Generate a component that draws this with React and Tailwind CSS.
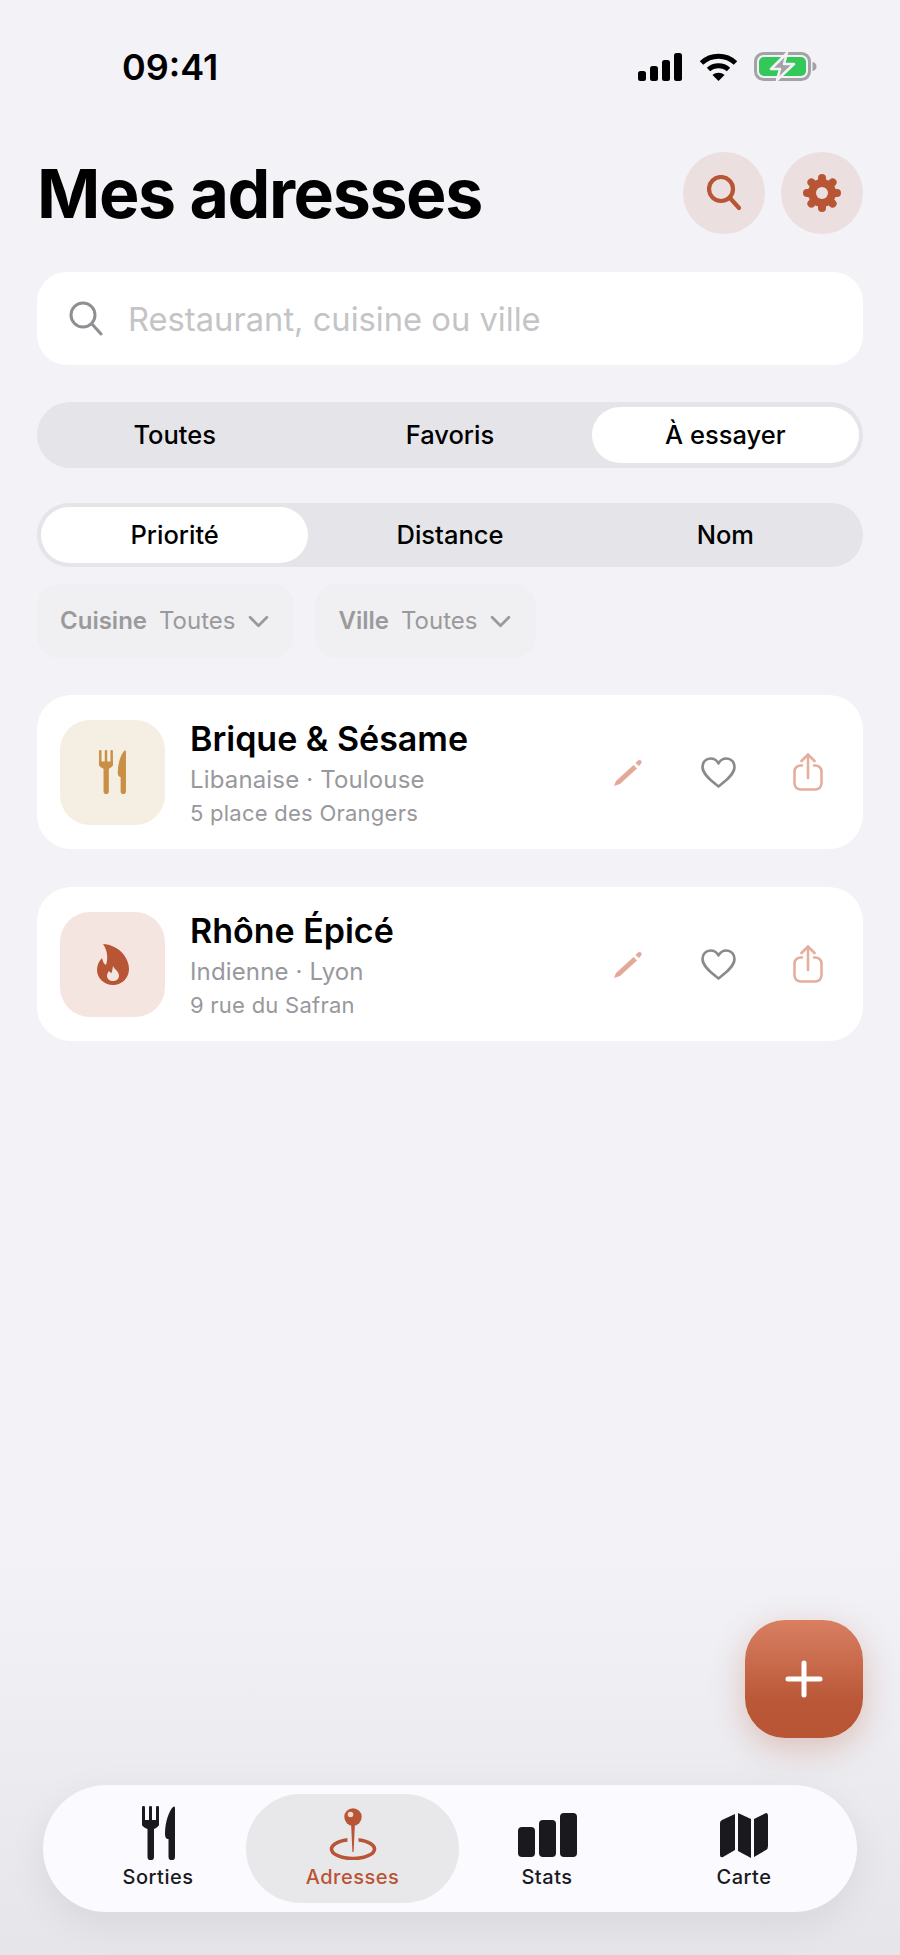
import React from 'react';

const ACCENT = '#b85535';

function Utensils({ className, color }) {
  return (
    <svg viewBox="0 0 33 54" className={className} fill={color}>
      <rect x="0" y="0" width="3" height="20" rx="1.3" />
      <rect x="7" y="0" width="3" height="20" rx="1.3" />
      <rect x="14" y="0" width="3" height="20" rx="1.3" />
      <path d="M0 14H17V17C17 20 15 22 12 23V51a3 3 0 0 1-6.5 0V23C2 22 0 20 0 17Z" />
      <path d="M33 2V51a3 3 0 0 1-6.5 0V33H26C24 33 23 31 23 28C23 16 27 5 31 1C32 0 33 .5 33 2Z" />
    </svg>
  );
}

function Flame() {
  return (
    <svg viewBox="0 0 32 41" className="w-[32px] h-[41px]">
      <path fill={ACCENT} d="M6 0C13 0 22 4 27 11C30 15 32 20 32 25C32 34 25 41 16 41C7 41 0 34 0 26C0 21 2 17 5 14C6 18 7 20 9 21C11 15 11 7 6 0Z" />
      <path fill="#f5e5e1" d="M16 22C17 25 22 27 22 32C22 35 19 37 16 37C13 37 10 35 10 32C10 30 11 28 12 27C13 28 13.5 29 14.5 29C15.5 27 15.5 24 16 22Z" />
    </svg>
  );
}

function SearchIcon({ color, width, className }) {
  return (
    <svg viewBox="0 0 34 36" className={className} fill="none" stroke={color} strokeWidth={width} strokeLinecap="round">
      <circle cx="14" cy="14" r="12" />
      <path d="M23 23L32 33" />
    </svg>
  );
}

function Gear() {
  const teeth = [0, 45, 90, 135];
  return (
    <svg viewBox="0 0 38 38" className="w-[38px] h-[38px]">
      <circle cx="19" cy="19" r="14" fill={ACCENT} />
      {teeth.map((a) => (
        <path key={a} d="M19 4V34" stroke={ACCENT} strokeWidth="8" strokeLinecap="round" transform={`rotate(${a} 19 19)`} />
      ))}
      <circle cx="19" cy="19" r="6" fill="#ecdfdf" />
    </svg>
  );
}

function Chevron() {
  return (
    <svg viewBox="0 0 20 12" className="w-[21px] h-[13px]" fill="none" stroke="#9a9a9c" strokeWidth="2.6" strokeLinecap="round" strokeLinejoin="round">
      <path d="M2 2L10 10L18 2" />
    </svg>
  );
}

function Pencil() {
  return (
    <svg viewBox="0 0 28 27" className="w-[28px] h-[27px]" fill="#e3a998">
      <path d="M0 27L2 22L19.5 6L23 9.5L6 25Z" />
      <path d="M21.5 4L24 1.5Q25.5 .3 27 1.5Q28.3 3 27 4.5L25 7Z" />
    </svg>
  );
}

function Heart() {
  return (
    <svg viewBox="0 0 35 31" className="w-[35px] h-[31px]" fill="none" stroke="#8a8a8e" strokeWidth="2.6" strokeLinejoin="round">
      <path d="M17.5 29.5C12 25 1.5 18 1.5 10C1.5 5 5 1.5 9.5 1.5C13 1.5 16 3.5 17.5 6.5C19 3.5 22 1.5 25.5 1.5C30 1.5 33.5 5 33.5 10C33.5 18 23 25 17.5 29.5Z" />
    </svg>
  );
}

function Share() {
  return (
    <svg viewBox="0 0 30 38" className="w-[30px] h-[38px]" fill="none" stroke="#e5ae9d" strokeWidth="2.6" strokeLinecap="round" strokeLinejoin="round">
      <path d="M9 12.5H7.5A6 6 0 0 0 1.5 18.5V30.5A6 6 0 0 0 7.5 36.5H22.5A6 6 0 0 0 28.5 30.5V18.5A6 6 0 0 0 22.5 12.5H21" />
      <path d="M15 25V2" />
      <path d="M8.5 8L15 1.5L21.5 8" />
    </svg>
  );
}

function StatusIcons() {
  return (
    <div className="flex items-center">
      <svg viewBox="0 0 45 28" className="w-[45px] h-[28px]" fill="#000">
        <rect x="0" y="18" width="8" height="10" rx="2.5" />
        <rect x="12" y="13" width="8" height="15" rx="2.5" />
        <rect x="24" y="7" width="8" height="21" rx="2.5" />
        <rect x="36" y="0" width="8" height="28" rx="2.5" />
      </svg>
      <svg viewBox="0 0 39 28" className="w-[39px] h-[28px] ml-[16px]" fill="none" stroke="#000" strokeWidth="5">
        <path d="M2.5 10C12 1 27 1 36.5 10" />
        <path d="M9.5 16.5C15 11.5 24 11.5 29.5 16.5" />
        <path fill="#000" stroke="none" d="M13.5 22C17 19 22 19 25.5 22L19.5 28Z" />
      </svg>
      <svg viewBox="0 0 63 29" className="w-[63px] h-[29px] ml-[16px]">
        <rect x="1.5" y="1.5" width="54" height="26" rx="8" fill="none" stroke="#a3a3a7" strokeWidth="3" />
        <rect x="5" y="5" width="47" height="19" rx="5" fill="#34c759" />
        <path d="M58.5 10C61 10.5 62.5 12 62.5 14.5C62.5 17 61 18.5 58.5 19Z" fill="#a3a3a7" />
        <path d="M33 1L17 17H26L23 28L40 12H30Z" fill="#a3a3a7" stroke="#f2f2f7" strokeWidth="2.5" strokeLinejoin="round" />
      </svg>
    </div>
  );
}

function Segment({ items, active, className }) {
  return (
    <div className={`flex items-center rounded-full bg-[#e4e4e9] ${className}`}>
      {items.map((label) => (
        <div key={label} className="flex-1 px-[4px]">
          <div className={`h-[56px] flex items-center justify-center rounded-full text-[25.5px] font-medium text-black ${label === active ? 'bg-white' : ''}`}>
            {label}
          </div>
        </div>
      ))}
    </div>
  );
}

function Chip({ name, value }) {
  return (
    <div className="flex items-center h-[74px] pl-[23px] pr-[25px] rounded-[22px] bg-[#f0f0f2] text-[24px] text-[#9a9a9c]">
      <span className="font-semibold">{name}</span>
      <span className="ml-[12px]">{value}</span>
      <span className="ml-[13px]"><Chevron /></span>
    </div>
  );
}

function Card({ icon, tint, name, sub, address }) {
  return (
    <div className="flex items-center h-[154px] pl-[23px] pr-[10px] bg-white rounded-[34px]">
      <div className={`flex items-center justify-center w-[105px] h-[105px] rounded-[30px] ${tint}`}>{icon}</div>
      <div className="flex-1 ml-[26px] pt-[3px]">
        <div className="text-[34px] leading-[42px] -mt-[2px] font-semibold text-black -ml-[1px]">{name}</div>
        <div className="text-[24px] leading-[32px] mt-[4px] text-[#98989d] tracking-[0.15px] -ml-[1px]">{sub}</div>
        <div className="text-[22px] leading-[30px] mt-[2px] text-[#98989d] tracking-[0.25px] -ml-[1px]">{address}</div>
      </div>
      <div className="flex items-center">
        <div className="w-[90px] flex justify-center"><Pencil /></div>
        <div className="w-[90px] flex justify-center"><Heart /></div>
        <div className="w-[90px] flex justify-center"><Share /></div>
      </div>
    </div>
  );
}

function Tab({ label, icon, active, className }) {
  return (
    <div className={`flex flex-col items-center justify-center h-[109px] ${active ? 'bg-[#e8e8eb] rounded-full text-[#b85535]' : 'text-[#1a1a1e]'} ${className}`}>
      <div className="h-[54px] flex items-end">{icon}</div>
      <div className="text-[20px] leading-[26px] mt-[4px] mb-[2px] font-medium tracking-[0.5px]">{label}</div>
    </div>
  );
}

export default function App() {
  return (
    <div className="relative w-[900px] h-[1955px] overflow-hidden bg-[#f2f2f7] [font-family:Inter,sans-serif] text-black">
      {/* status bar */}
      <div className="flex items-center justify-between h-[29px] mt-[52px] pl-[122px] pr-[83px]">
        <div className="text-[36px] font-semibold leading-none">09:41</div>
        <StatusIcons />
      </div>

      <div className="px-[37px]">
        <div className="flex items-center justify-between h-[82px] mt-[71px]">
          <h1 className="text-[68px] leading-none font-bold tracking-[-1.4px]">Mes adresses</h1>
          <div className="flex gap-[16px]">
            <div className="flex items-center justify-center w-[82px] h-[82px] rounded-full bg-[#ecdfdf]">
              <SearchIcon color={ACCENT} width="4.2" className="w-[34px] h-[36px]" />
            </div>
            <div className="flex items-center justify-center w-[82px] h-[82px] rounded-full bg-[#ecdfdf]">
              <Gear />
            </div>
          </div>
        </div>

        <div className="flex items-center h-[93px] mt-[38px] pl-[32px] bg-white rounded-[30px]">
          <SearchIcon color="#8e8e93" width="3" className="w-[34px] h-[36px]" />
          <span className="ml-[25px] pt-[2px] text-[32.7px] text-[#c4c4c6]">Restaurant, cuisine ou ville</span>
        </div>

        <div className="mt-[37px]">
          <Segment className="h-[66px]" items={['Toutes', 'Favoris', 'À essayer']} active="À essayer" />
        </div>
        <div className="mt-[35px]">
          <Segment className="h-[64px]" items={['Priorité', 'Distance', 'Nom']} active="Priorité" />
        </div>

        <div className="flex gap-[21px] mt-[17px]">
          <Chip name="Cuisine" value="Toutes" />
          <Chip name="Ville" value="Toutes" />
        </div>

        <div className="flex flex-col gap-[38px] mt-[37px]">
          <Card
            tint="bg-[#f5eee2]"
            icon={<Utensils color="#c98f45" className="w-[27px] h-[44px]" />}
            name="Brique & Sésame"
            sub="Libanaise · Toulouse"
            address="5 place des Orangers"
          />
          <Card
            tint="bg-[#f5e5e1]"
            icon={<Flame />}
            name="Rhône Épicé"
            sub="Indienne · Lyon"
            address="9 rue du Safran"
          />
        </div>
      </div>

      {/* bottom fade behind the floating bar */}
      <div className="absolute inset-x-0 bottom-0 h-[400px] bg-gradient-to-b from-[#f2f2f7]/0 to-[#e6e6ea]" />

      {/* add button */}
      <div className="absolute left-[745px] top-[1620px] flex items-center justify-center w-[118px] h-[118px] rounded-[40px] bg-gradient-to-b from-[#d97f62] via-[#b95736] via-70% to-[#b85535] shadow-[0_10px_34px_rgba(184,85,53,0.3)]">
        <svg viewBox="0 0 38 38" className="w-[38px] h-[38px]" fill="none" stroke="#fff" strokeWidth="5" strokeLinecap="round">
          <path d="M19 3V35M3 19H35" />
        </svg>
      </div>

      {/* tab bar */}
      <div className="absolute left-[43px] top-[1785px] w-[814px] h-[127px] flex items-center pl-[10px] rounded-full bg-[#fbfaff] shadow-[0_12px_40px_rgba(0,0,0,0.07)]">
        <Tab
          label="Sorties"
          className="w-[193px] pl-[17px]"
          icon={<Utensils color="#1a1a1e" className="w-[33px] h-[54px]" />}
        />
        <Tab
          label="Adresses"
          active
          className="w-[213px]"
          icon={
            <svg viewBox="0 0 48 52" className="w-[48px] h-[52px]">
              <ellipse cx="24" cy="41" rx="21.5" ry="9.5" fill="none" stroke={ACCENT} strokeWidth="3.6" />
              <path d="M24 26V36" stroke="#e8e8eb" strokeWidth="11" />
              <path d="M22 14H26L24.6 44H23.4Z" fill={ACCENT} />
              <circle cx="24" cy="9" r="8.7" fill={ACCENT} />
              <circle cx="21.5" cy="6.5" r="2.8" fill="#f3d9cf" />
            </svg>
          }
        />
        <Tab
          label="Stats"
          className="w-[176px]"
          icon={
            <svg viewBox="0 0 59 44" className="w-[59px] h-[44px] mb-[3px]" fill="#1a1a1e">
              <rect x="0" y="14" width="17" height="30" rx="4" />
              <rect x="21" y="7" width="17" height="37" rx="4" />
              <rect x="42" y="0" width="17" height="44" rx="4" />
            </svg>
          }
        />
        <Tab
          label="Carte"
          className="w-[218px]"
          icon={
            <svg viewBox="0 0 48 45" className="w-[48px] h-[45px] mb-[2px]" fill="#1a1a1e">
              <path d="M15 1V37L3 44Q0 45 0 42V10Q0 8 2 7Z" />
              <path d="M18 0L31 6V45L18 38Z" />
              <path d="M34 6L46 0Q48 0 48 3V33Q48 36 46 37L34 44Z" />
            </svg>
          }
        />
      </div>
    </div>
  );
}
